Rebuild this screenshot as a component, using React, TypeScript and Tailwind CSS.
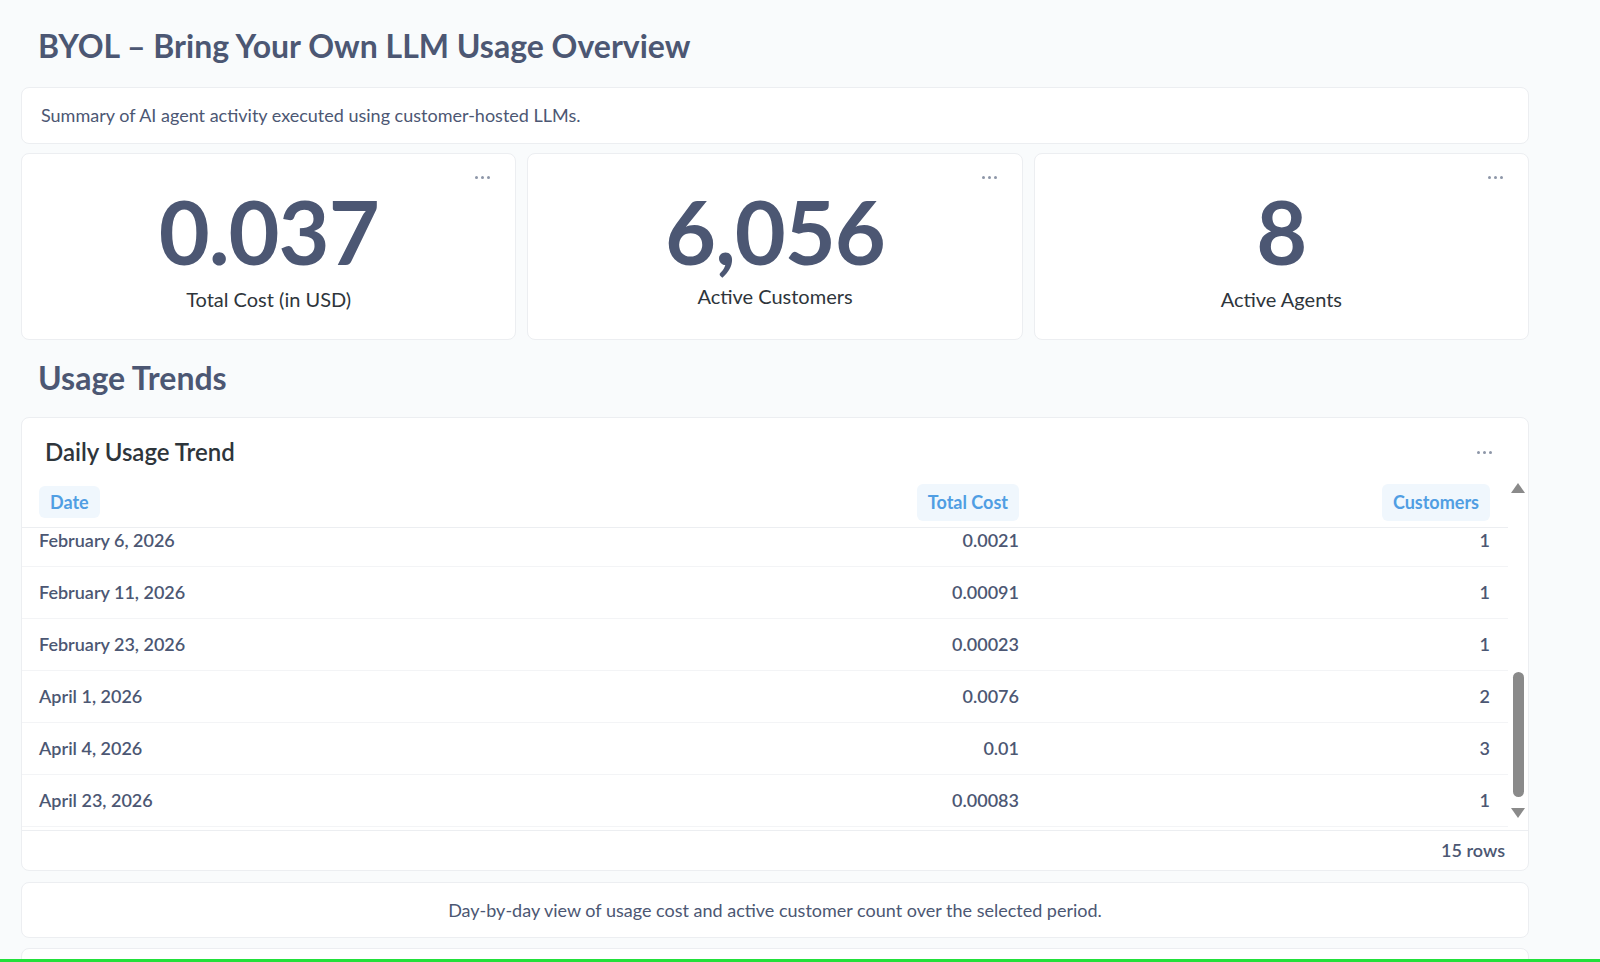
import React from "react";

const rows = [
  ["February 6, 2026", "0.0021", "1"],
  ["February 11, 2026", "0.00091", "1"],
  ["February 23, 2026", "0.00023", "1"],
  ["April 1, 2026", "0.0076", "2"],
  ["April 4, 2026", "0.01", "3"],
  ["April 23, 2026", "0.00083", "1"],
];

const Dots = () => (
  <div className="flex gap-[3px]">
    <span className="w-[3px] h-[3px] rounded-full bg-[#8d96a8]" />
    <span className="w-[3px] h-[3px] rounded-full bg-[#8d96a8]" />
    <span className="w-[3px] h-[3px] rounded-full bg-[#8d96a8]" />
  </div>
);

function Stat({ value, label, labelMt }: { value: string; label: string; labelMt: string }) {
  return (
    <div className="flex-1 h-[187px] bg-white border border-[#eceef1] rounded-lg relative flex flex-col items-center pt-[32px]">
      <div className="absolute right-[25px] top-[22px]"><Dots /></div>
      <div className="text-[88px] leading-[90px] font-bold text-[#4c5773] tracking-[-1px]">{value}</div>
      <div className={`text-[20px] text-[#2e353b] ${labelMt}`}>{label}</div>
    </div>
  );
}

export default function App() {
  return (
    <div className="w-[1600px] h-[962px] overflow-hidden bg-[#f9fbfc] relative" style={{ fontFamily: "Lato, 'Noto Sans', sans-serif" }}>
      <div className="w-[1508px] ml-[21px] flex flex-col">
        <h1 className="text-[32px] font-bold text-[#4c5773] ml-[17px] mt-[26px] h-[61px] leading-[40px]">BYOL – Bring Your Own LLM Usage Overview</h1>
        <div className="h-[57px] bg-white border border-[#eceef1] rounded-lg flex items-center px-[19px] text-[18px] text-[#4c5773]">
          Summary of AI agent activity executed using customer-hosted LLMs.
        </div>
        <div className="flex gap-[11px] mt-[9px]">
          <Stat value="0.037" label="Total Cost (in USD)" labelMt="mt-[8px]" />
          <Stat value="6,056" label="Active Customers" labelMt="mt-[5px]" />
          <Stat value="8" label="Active Agents" labelMt="mt-[8px]" />
        </div>
        <h2 className="text-[32px] font-bold text-[#4c5773] ml-[17px] mt-[18px] h-[59px] leading-[40px]">Usage Trends</h2>
        <div className="h-[454px] bg-white border border-[#eceef1] rounded-lg flex flex-col relative">
          <div className="flex items-center justify-between pl-[23px] pr-[36px] pt-[8px] h-[60px]">
            <div className="text-[24px] font-semibold text-[#2e353b]">Daily Usage Trend</div>
            <Dots />
          </div>
          <div className="flex">
            <div className="w-[1486px] flex flex-col">
              <div className="flex items-center h-[50px] border-b border-[#eceef1] text-[18px] font-bold text-[#509ee3]">
                <div className="w-[520px] pl-[17px]"><span className="bg-[#f0f7fd] rounded-md px-[11px] py-[5px]">Date</span></div>
                <div className="w-[477px] flex justify-end"><span className="bg-[#f0f7fd] rounded-md px-[11px] py-[5px]">Total Cost</span></div>
                <div className="w-[471px] flex justify-end"><span className="bg-[#f0f7fd] rounded-md px-[11px] py-[5px]">Customers</span></div>
              </div>
              <div className="h-[302px] overflow-hidden">
                <div className="-mt-[13px]">
                  {rows.map((r, i) => (
                    <div key={i} className="flex items-center h-[52px] border-b border-[#f3f4f6] text-[18px] font-semibold text-[#4c5773]">
                      <div className="w-[520px] pl-[17px]">{r[0]}</div>
                      <div className="w-[477px] text-right">{r[1]}</div>
                      <div className="w-[471px] text-right">{r[2]}</div>
                    </div>
                  ))}
                </div>
              </div>
            </div>
            <div className="w-[20px] flex flex-col items-center relative">
              <div className="mt-[5px] w-0 h-0 border-l-[7px] border-r-[7px] border-b-[10px] border-l-transparent border-r-transparent border-b-[#8a8a8a]" />
              <div className="absolute top-[194px] left-[5px] w-[11px] h-[125px] rounded-full bg-[#8a8a8a]" />
              <div className="absolute top-[330px] left-[3px] w-0 h-0 border-l-[7px] border-r-[7px] border-t-[10px] border-l-transparent border-r-transparent border-t-[#8a8a8a]" />
            </div>
          </div>
          <div className="flex-1 border-t border-[#eceef1] flex items-center justify-end pr-[23px] text-[18px] font-semibold text-[#4c5773]">15 rows</div>
        </div>
        <div className="mt-[11px] h-[56px] bg-white border border-[#eceef1] rounded-lg flex items-center justify-center text-[18px] text-[#4c5773]">
          Day-by-day view of usage cost and active customer count over the selected period.
        </div>
        <div className="mt-[10px] h-[40px] bg-white border border-[#eceef1] rounded-lg" />
      </div>
      <div className="absolute left-0 bottom-0 w-full h-[3px] bg-[#22e03a]" />
    </div>
  );
}
